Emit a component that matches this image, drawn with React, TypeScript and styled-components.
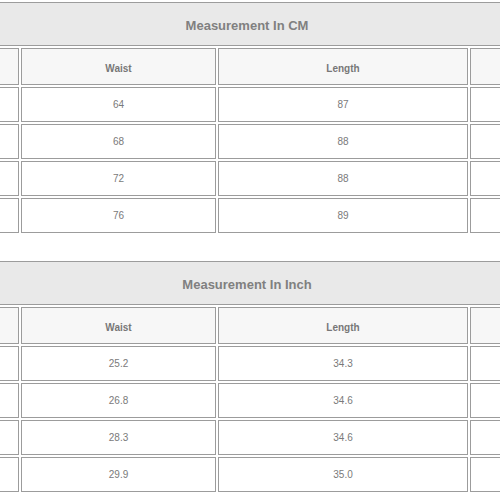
import styled, { createGlobalStyle } from 'styled-components';

const GlobalStyle = createGlobalStyle`
  html, body {
    margin: 0;
    padding: 0;
    background: #fff;
  }
  body {
    font-family: "Liberation Sans", Arial, sans-serif;
  }
`;

const Viewport = styled.div`
  width: 500px;
  height: 500px;
  overflow: hidden;
`;

const Table = styled.table<{ $gap?: number }>`
  border-collapse: separate;
  border-spacing: 2px;
  table-layout: fixed;
  width: 618px;
  margin-left: -62px;
  margin-top: ${({ $gap }) => $gap ?? 0}px;
`;

const Cell = styled.td`
  box-sizing: border-box;
  border: 1px solid #9c9c9c;
  padding: 0;
  text-align: center;
  vertical-align: middle;
  font-size: 10px;
  color: #7a7a7a;
  height: 35px;
  background: #fff;
`;

const TitleCell = styled(Cell)`
  height: 44px;
  padding-top: 3px;
  background: #e9e9e9;
  font-size: 13px;
  font-weight: bold;
  color: #808080;
`;

const HeadCell = styled(Cell)`
  height: 37px;
  padding-top: 3px;
  background: #f7f7f7;
  font-weight: bold;
  color: #777;
`;

// the size and hip columns run past the edges of the view; only their borders show
type Row = [string, string];

const cmRows: Row[] = [
  ['64', '87'],
  ['68', '88'],
  ['72', '88'],
  ['76', '89'],
];

const inchRows: Row[] = [
  ['25.2', '34.3'],
  ['26.8', '34.6'],
  ['28.3', '34.6'],
  ['29.9', '35.0'],
];

function SizeTable({ title, rows, gap }: { title: string; rows: Row[]; gap?: number }) {
  return (
    <Table $gap={gap}>
      <colgroup>
        <col style={{ width: 79 }} />
        <col style={{ width: 195 }} />
        <col style={{ width: 250 }} />
        <col style={{ width: 84 }} />
      </colgroup>
      <tbody>
        <tr>
          <TitleCell colSpan={4}>{title}</TitleCell>
        </tr>
        <tr>
          <HeadCell />
          <HeadCell>Waist</HeadCell>
          <HeadCell>Length</HeadCell>
          <HeadCell />
        </tr>
        {rows.map(([waist, length], i) => (
          <tr key={i}>
            <Cell />
            <Cell>{waist}</Cell>
            <Cell>{length}</Cell>
            <Cell />
          </tr>
        ))}
      </tbody>
    </Table>
  );
}

export default function App() {
  return (
    <Viewport>
      <GlobalStyle />
      <SizeTable title="Measurement In CM" rows={cmRows} />
      <SizeTable title="Measurement In Inch" rows={inchRows} gap={24} />
    </Viewport>
  );
}
